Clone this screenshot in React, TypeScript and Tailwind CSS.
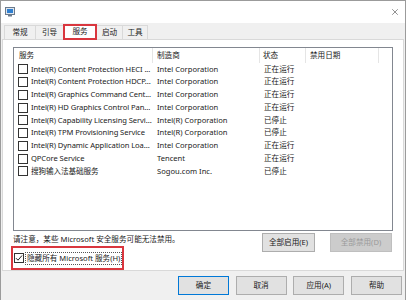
import { X } from "lucide-react"

const rows = [
  { name: "Intel(R) Content Protection HECI ...", maker: "Intel Corporation", status: "正在运行" },
  { name: "Intel(R) Content Protection HDCP...", maker: "Intel Corporation", status: "正在运行" },
  { name: "Intel(R) Graphics Command Cent...", maker: "Intel Corporation", status: "正在运行" },
  { name: "Intel(R) HD Graphics Control Pan...", maker: "Intel Corporation", status: "正在运行" },
  { name: "Intel(R) Capability Licensing Servi...", maker: "Intel(R) Corporation", status: "已停止" },
  { name: "Intel(R) TPM Provisioning Service", maker: "Intel(R) Corporation", status: "已停止" },
  { name: "Intel(R) Dynamic Application Loa...", maker: "Intel Corporation", status: "正在运行" },
  { name: "QPCore Service", maker: "Tencent", status: "正在运行" },
  { name: "搜狗输入法基础服务", maker: "Sogou.com Inc.", status: "已停止" },
]

function Box({ checked }: { checked?: boolean }) {
  return (
    <div className="w-[10px] h-[10px] border border-[#333] bg-white flex items-center justify-center shrink-0">
      {checked && (
        <svg width="8" height="8" viewBox="0 0 8 8">
          <path d="M1 4.2 L3 6.2 L7 1.5" fill="none" stroke="#222" strokeWidth="1" />
        </svg>
      )}
    </div>
  )
}

function Btn({ children, className = "" }: { children: React.ReactNode; className?: string }) {
  return (
    <div className={"h-[19px] flex items-center justify-center border " + className}>
      {children}
    </div>
  )
}

function App() {
  return (
    <div className="w-[406px] h-[300px] bg-[#f0f0f0] border-t border-x border-[#9b9b9b] flex flex-col overflow-hidden text-[#1a1a1a] text-[7.6px] font-['Noto_Sans','Noto_Sans_CJK_SC',sans-serif]">

      {/* title */}
      <div className="h-[22px] bg-white flex items-center justify-between pl-[4px] pr-[5px] shrink-0">
        <svg width="10" height="10" viewBox="0 0 10 10">
          <rect x="0.5" y="0.5" width="9" height="7" fill="#dfe6ee" stroke="#6b7a8c" />
          <rect x="2" y="2" width="6" height="4" fill="#2f7fd0" />
          <rect x="3" y="8" width="4" height="1.5" fill="#6b7a8c" />
        </svg>
        <X className="w-[10px] h-[10px] text-[#333]" strokeWidth={1.3} />
      </div>

      {/* tabs */}
      <div className="h-[16px] flex items-end pl-[3px] relative z-10 shrink-0">
        <div className="w-[31px] h-[14px] border-l border-t border-[#d9d9d9] flex items-center justify-center">常规</div>
        <div className="w-[28px] h-[14px] border-l border-t border-[#d9d9d9] flex items-center justify-center">引导</div>
        <div className="w-[34px] h-[16px] -mb-px border-2 border-[#d9363e] bg-white flex items-center justify-center">服务</div>
        <div className="w-[25px] h-[14px] border-t border-[#d9d9d9] flex items-center justify-center">启动</div>
        <div className="w-[26px] h-[14px] border-l border-r border-t border-[#d9d9d9] flex items-center justify-center">工具</div>
      </div>

      {/* panel */}
      <div className="mx-[1px] h-[232px] border border-[#d9d9d9] bg-white flex flex-col px-[10px] pt-[7px] shrink-0">
        <div className="h-[184px] border border-[#828790] bg-white flex flex-col">
          <div className="h-[15px] flex items-center shrink-0">
            <div className="w-[139px] pl-[5px] border-r border-[#e5e5e5] h-full flex items-center">服务</div>
            <div className="w-[107px] pl-[4px] border-r border-[#e5e5e5] h-full flex items-center">制造商</div>
            <div className="w-[46px] pl-[3px] border-r border-[#e5e5e5] h-full flex items-center">状态</div>
            <div className="w-[73px] pl-[4px] border-r border-[#e5e5e5] h-full flex items-center">禁用日期</div>
          </div>
          {rows.map((r) => (
            <div key={r.name} className="h-[12.75px] flex items-center">
              <div className="w-[139px] pl-[4px] flex items-center gap-[3px] whitespace-nowrap">
                <Box />
                <span className="tracking-[-0.08px]">{r.name}</span>
              </div>
              <div className="w-[107px] pl-[4px] whitespace-nowrap">{r.maker}</div>
              <div className="w-[46px] pl-[4px] whitespace-nowrap">{r.status}</div>
            </div>
          ))}
        </div>

        <div className="flex justify-between mt-[2px]">
          <div className="flex flex-col">
            <div className="h-[13px] pt-[1px] flex items-center">请注意，某些 Microsoft 安全服务可能无法禁用。</div>
            <div className="-ml-[2px] w-[113px] h-[24px] border-2 border-[#d9363e] flex items-center pl-[1px] gap-[1px]">
              <Box checked />
              <span className="border border-dotted border-[#555] px-[1px] leading-[11px] whitespace-nowrap">隐藏所有 Microsoft 服务(H)</span>
            </div>
          </div>
          <div className="flex gap-[15px] pr-[1px]">
            <Btn className="w-[53px] bg-[#e1e1e1] border-[#adadad]">全部启用(E)</Btn>
            <Btn className="w-[62px] bg-[#cccccc] border-[#bfbfbf] text-[#9a9a9a]">全部禁用(D)</Btn>
          </div>
        </div>
      </div>

      {/* bottom buttons */}
      <div className="flex justify-end gap-[6.7px] pr-[3px] mt-[5px]">
        <Btn className="w-[51px] h-[18px] bg-[#e1e1e1] border-[#0078d7]">确定</Btn>
        <Btn className="w-[51px] h-[18px] bg-[#e1e1e1] border-[#adadad]">取消</Btn>
        <Btn className="w-[51px] h-[18px] bg-[#e1e1e1] border-[#adadad]">应用(A)</Btn>
        <Btn className="w-[51px] h-[18px] bg-[#e1e1e1] border-[#adadad]">帮助</Btn>
      </div>
    </div>
  )
}

export default App
